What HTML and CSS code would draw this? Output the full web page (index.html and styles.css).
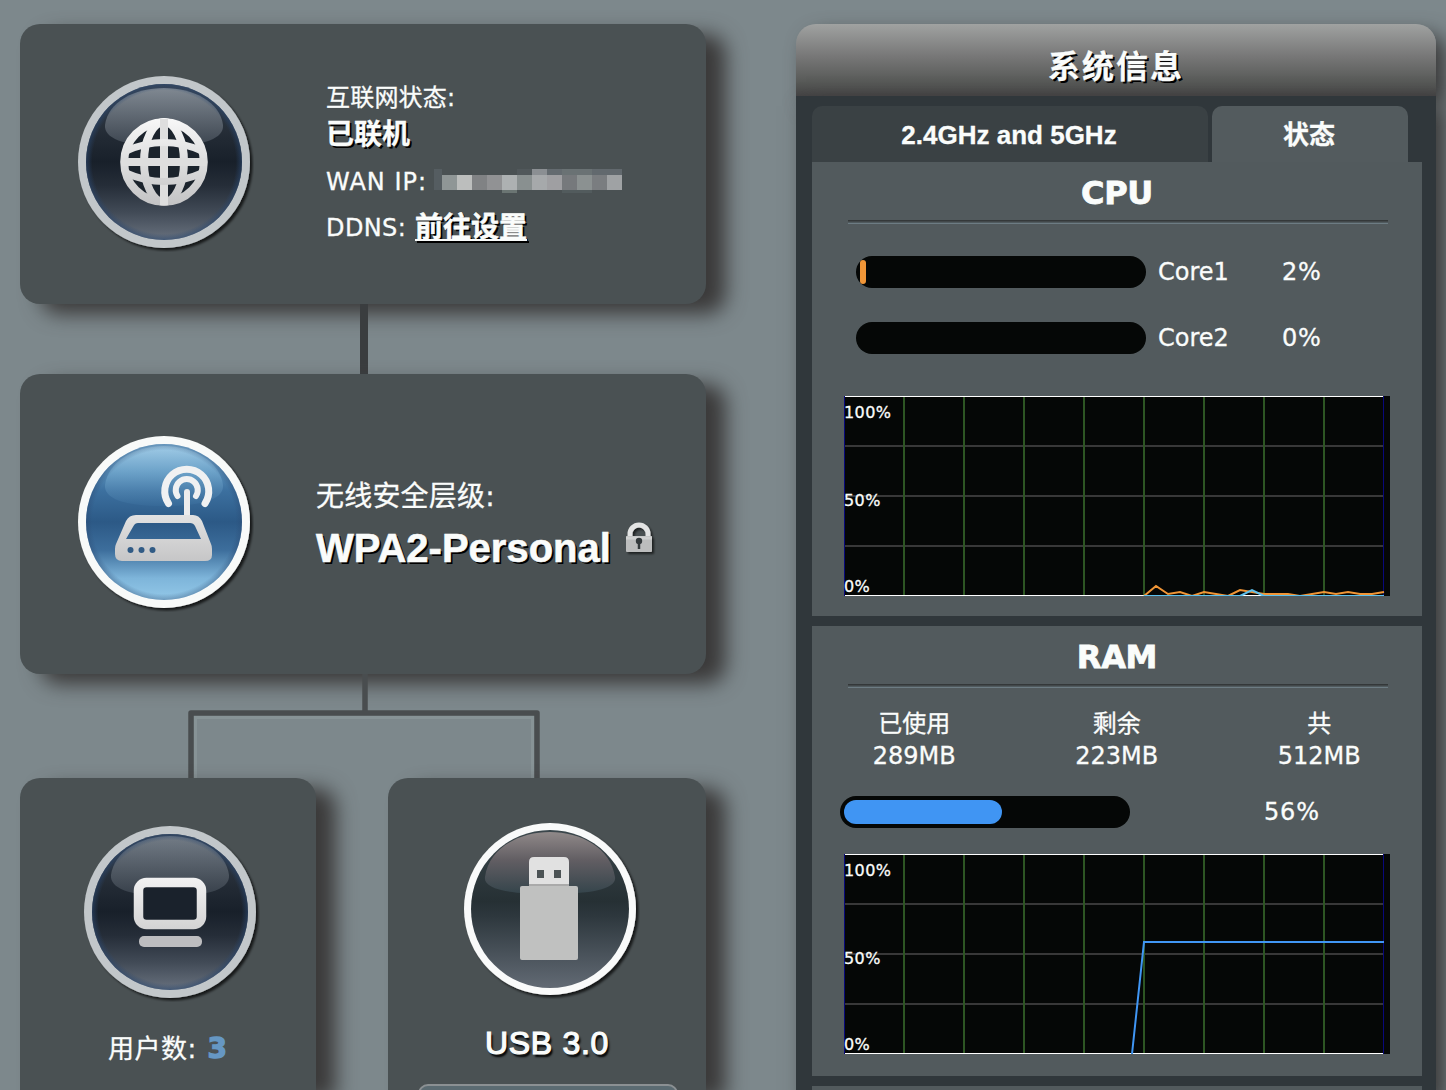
FILE: index.html
```
<!DOCTYPE html>
<html lang="zh-CN">
<head>
<meta charset="utf-8">
<title>网络地图</title>
<link rel="stylesheet" href="styles.css">
</head>
<body>
<svg class="defs" width="0" height="0" aria-hidden="true">
  <defs>
    <linearGradient id="dark" x1="0" y1="0" x2="0" y2="1"><stop offset="0" stop-color="#394554"/><stop offset=".3" stop-color="#252d37"/><stop offset=".5" stop-color="#18202a"/><stop offset=".65" stop-color="#252d38"/><stop offset=".82" stop-color="#414a56"/><stop offset="1" stop-color="#68717e"/></linearGradient>
    <linearGradient id="darkGloss" x1="0" y1="0" x2="0" y2="1"><stop offset="0" stop-color="#929aa2"/><stop offset="1" stop-color="#434c57"/></linearGradient>
    <linearGradient id="blue" x1="0" y1="0" x2="0" y2="1"><stop offset="0" stop-color="#83bade"/><stop offset=".3" stop-color="#3c709f"/><stop offset=".5" stop-color="#2c5986"/><stop offset=".68" stop-color="#3d6e9c"/><stop offset=".86" stop-color="#7eb5da"/><stop offset="1" stop-color="#93c8e8"/></linearGradient>
    <linearGradient id="blueGloss" x1="0" y1="0" x2="0" y2="1"><stop offset="0" stop-color="#b4d9ee"/><stop offset=".45" stop-color="#77add2"/><stop offset="1" stop-color="#396c9b"/></linearGradient>
    <linearGradient id="usb" x1="0" y1="0" x2="0" y2="1"><stop offset="0" stop-color="#3b474c"/><stop offset=".45" stop-color="#263034"/><stop offset=".55" stop-color="#2e383e"/><stop offset="1" stop-color="#626a74"/></linearGradient>
    <linearGradient id="usbGloss" x1="0" y1="0" x2="0" y2="1"><stop offset="0" stop-color="#908989"/><stop offset=".45" stop-color="#625e63"/><stop offset="1" stop-color="#34444b"/></linearGradient>
    <linearGradient id="metal" gradientUnits="userSpaceOnUse" x1="0" y1="46" x2="0" y2="134"><stop offset="0" stop-color="#f8f8f8"/><stop offset="1" stop-color="#c3c3c4"/></linearGradient>
    <radialGradient id="edge"><stop offset=".92" stop-color="#2b4870" stop-opacity="0"/><stop offset="1" stop-color="#2b4870" stop-opacity=".6"/></radialGradient>
    <filter id="drop" x="-10%" y="-10%" width="125%" height="125%"><feDropShadow dx="2.500" dy="2.500" stdDeviation="1.300" flood-color="#000" flood-opacity=".7"/></filter>
    <filter id="dropSmall" x="-20%" y="-20%" width="150%" height="150%"><feDropShadow dx="2" dy="2" stdDeviation="1" flood-color="#000" flood-opacity=".6"/></filter>
    <g id="grid">
      <rect width="546" height="200" fill="#050706"/>
      <path d="M0 50H540M0 100H540M0 150H540" stroke="#383838" stroke-width="2"/>
      <path d="M60 0V200M120 0V200M180 0V200M240 0V200M300 0V200M360 0V200M420 0V200M480 0V200" stroke="#2d5523" stroke-width="2"/>
      <path d="M.5 0V200M539.5 0V200" stroke="#08087a"/>
      <path d="M1 .5H539M1 199.5H539" stroke="#fff"/>
    </g>
  </defs>
</svg>

<main class="page">
  <div class="map">
    <section class="card internet">
      <svg class="orb" width="180" height="180" viewBox="0 0 180 180">
        <circle cx="90" cy="90" r="86" fill="#c2c7ca" filter="url(#drop)"/>
        <circle cx="90" cy="90" r="78" fill="url(#dark)"/>
        <path d="M31 53C34 30 60 16 90 16S146 30 149 53C150 66 132 74 90 74S30 66 31 53Z" fill="url(#darkGloss)" opacity=".8"/>
        <circle cx="90" cy="90" r="78" fill="url(#edge)"/>
        <circle cx="90" cy="90" r="42" fill="#1b232c"/>
        <g fill="none" stroke="url(#metal)" stroke-width="8">
          <circle cx="90" cy="90" r="39.800"/>
          <ellipse cx="90" cy="90" rx="20" ry="40"/>
          <path d="M90 47V133M47 90.010H133" stroke="#dedede"/>
          <path d="M52 79Q90 62 128 79M52 101Q90 118 128 101" stroke-width="7"/>
        </g>
      </svg>
      <div class="internet-info">
        <div class="row label">互联网状态:</div>
        <div class="row strong">已联机</div>
        <div class="row wan"><span>WAN IP:</span>
          <svg class="mosaic" width="188" height="24" viewBox="0 0 188 24" shape-rendering="crispEdges">
            <path fill="#555d61" d="M0 0h8v21H0z"/><path fill="#8f9696" d="M8 6h15v15H8z"/><path fill="#bcbebd" d="M23 6h15v15H23z"/><path fill="#808284" d="M38 6h15v15H38z"/><path fill="#919294" d="M53 6h15v15H53z"/><path fill="#adb1b2" d="M68 6h15v15H68z"/><path fill="#6b7573" d="M68 21h15v3H68z"/><path fill="#899090" d="M83 6h15v15H83z"/><path fill="#51585b" d="M83 0h15v6H83z"/><path fill="#8b8f93" d="M98 0h15v6H98z"/><path fill="#a6a9ab" d="M98 6h15v15H98z"/><path fill="#646b70" d="M113 0h15v6h-15z"/><path fill="#9f9fa2" d="M113 6h15v15h-15z"/><path fill="#6a7274" d="M128 0h30v6h-30z"/><path fill="#76797c" d="M128 6h15v15h-15z"/><path fill="#525b5d" d="M128 21h30v3h-30z"/><path fill="#8b9191" d="M143 6h15v15h-15z"/><path fill="#62696e" d="M158 0h30v6h-30z"/><path fill="#7a7d80" d="M158 6h15v15h-15z"/><path fill="#9fa2a4" d="M173 6h15v15h-15z"/>
          </svg>
        </div>
        <div class="row ddns"><span>DDNS:</span><a class="strong link">前往设置</a></div>
      </div>
    </section>

    <div class="link-line"></div>

    <section class="card wireless">
      <svg class="orb" width="180" height="180" viewBox="0 0 180 180">
        <circle cx="90" cy="90" r="86" fill="#f8faf9" filter="url(#drop)"/>
        <circle cx="90" cy="90" r="78" fill="url(#blue)"/>
        <path d="M31 53C34 30 60 14 90 14S146 30 149 53C150 66 132 74 90 74S30 66 31 53Z" fill="url(#blueGloss)" opacity=".6"/>
        <circle cx="90" cy="90" r="78" fill="url(#edge)" opacity=".6"/>
        <g fill="none" stroke="#f0f1f2" stroke-linecap="round">
          <path d="M94.500 71.500A22 22 0 1 1 131 71.500" stroke-width="7"/>
          <path d="M103.500 64A11 11 0 1 1 122 64" stroke-width="6"/>
          <path d="M113 60V86" stroke="#ececed" stroke-width="6"/>
        </g>
        <path fill-rule="evenodd" fill="url(#metal)" d="M62 83H119Q125 83 128 89L137 112Q138 114 138 117V123Q138 129 131 129H48Q41 129 41 122V117Q41 114 42 112L52 89Q55 83 62 83ZM64 91Q61 91 59.500 94L52 107H127L121 94Q119.500 91 116 91Z"/>
        <g fill="#315b85"><circle cx="56.500" cy="118" r="3"/><circle cx="67.500" cy="118" r="3"/><circle cx="78.500" cy="118" r="3"/></g>
      </svg>
      <div class="wireless-info">
        <div class="wl-label">无线安全层级:</div>
        <div class="wl-row"><span class="wl-value">WPA2-Personal</span>
          <svg class="lock" width="32" height="36" viewBox="0 0 32 36">
            <g filter="url(#dropSmall)"><path d="M6 17V12A9 9 0 0 1 24 12V17" fill="none" stroke="#e3e4e4" stroke-width="5"/><rect x="2" y="14" width="26" height="16" rx="1" fill="#bcbdbd"/></g>
            <path d="M2 16H28" stroke="#d1d2d2" stroke-width="3"/>
            <circle cx="15" cy="19" r="3.200" fill="#343a3c"/><path d="M15 19V27" stroke="#343a3c" stroke-width="2.500"/>
          </svg>
        </div>
      </div>
    </section>

    <svg class="branch" width="686" height="104" viewBox="0 0 686 104">
      <path d="M175.500 104V43.500H512.500V104" fill="none" stroke="#879396" stroke-width="3"/>
      <path d="M345 0V39M171 104V39H517V104" fill="none" stroke="#494d4f" stroke-width="5.500" stroke-linejoin="round"/>
    </svg>

    <div class="bottom-cards">
      <section class="card clients">
        <svg class="orb" width="180" height="180" viewBox="0 0 180 180">
          <circle cx="90" cy="90" r="86" fill="#c2c7ca" filter="url(#drop)"/>
          <circle cx="90" cy="90" r="78" fill="url(#dark)"/>
          <path d="M31 53C34 30 60 14 90 14S146 30 149 53C150 66 132 74 90 74S30 66 31 53Z" fill="url(#darkGloss)" opacity=".65"/>
          <circle cx="90" cy="90" r="78" fill="url(#edge)"/>
          <rect x="58.500" y="60.500" width="63" height="42" rx="8" fill="#1a222c" stroke="url(#metal)" stroke-width="9.500"/>
          <rect x="59" y="114" width="63" height="11" rx="5" fill="#bdbdbf"/>
        </svg>
        <div class="client-count">用户数: <b>3</b></div>
      </section>
      <section class="card usb">
        <svg class="orb" width="180" height="180" viewBox="0 0 180 180">
          <circle cx="90" cy="90" r="86" fill="#f9fafa" filter="url(#drop)"/>
          <circle cx="90" cy="90" r="79" fill="url(#usb)"/>
          <path d="M25 58C29 29 59 13 90 13S151 29 155 58C157 70 132 75 90 75S23 70 25 58Z" fill="url(#usbGloss)"/>
          <path d="M69 69V43Q69 38 74 38H104Q109 38 109 43V69Z" fill="#e1e1e1"/>
          <path d="M69 66H109" stroke="#aaa" stroke-width="2"/>
          <path d="M77 51h7v8h-7zM94 51h7v8h-7z" fill="#4c5355"/>
          <rect x="60" y="67" width="58" height="74" rx="2" fill="#c0c1c0"/>
        </svg>
        <div class="usb-label">USB 3.0</div>
        <div class="usb-box"></div>
      </section>
    </div>
  </div>

  <aside class="panel">
    <header class="panel-title">系统信息</header>
    <div class="panel-body">
      <nav class="tabs"><div class="tab wifi">2.4GHz and 5GHz</div><div class="tab active">状态</div></nav>
      <section class="block cpu">
        <h2>CPU</h2>
        <div class="rule"></div>
        <div class="core first"><div class="bar"><div class="fill orange" style="width:2%"></div></div><span class="name">Core1</span><span class="pct">2%</span></div>
        <div class="core"><div class="bar"></div><span class="name">Core2</span><span class="pct">0%</span></div>
        <div class="chart">
          <svg width="546" height="200" viewBox="0 0 546 200"><use href="#grid"/>
            <path d="M300 200L312 190 324 198 336 196 348 200 360 196 372 198 384 200 396 194 408 196 420 198 432 198 444 198 456 200 468 198 480 196 492 198 504 196 516 198 528 198 540 196" fill="none" stroke="#f09536" stroke-width="2"/>
            <path d="M300 200H396L408 194 420 200H540" fill="none" stroke="#5cc0ee" stroke-width="2"/>
          </svg>
          <span class="tick t100">100%</span><span class="tick t50">50%</span><span class="tick t0">0%</span>
        </div>
      </section>
      <section class="block ram">
        <h2>RAM</h2>
        <div class="rule"></div>
        <div class="memory"><div>已使用<br>289MB</div><div>剩余<br>223MB</div><div>共<br>512MB</div></div>
        <div class="usage"><div class="bar"><div class="fill blue" style="width:56%"></div></div><span class="pct">56%</span></div>
        <div class="chart">
          <svg width="546" height="200" viewBox="0 0 546 200"><use href="#grid"/><path d="M288 200L300 88H540" fill="none" stroke="#4096f4" stroke-width="2"/></svg>
          <span class="tick t100">100%</span><span class="tick t50">50%</span><span class="tick t0">0%</span>
        </div>
      </section>
      <section class="block next"></section>
    </div>
  </aside>
</main>
</body>
</html>
```

FILE: styles.css
```
* { box-sizing: border-box; }
body { margin: 0; background: #7d888c; color: #fafcfb; font-family: "DejaVu Sans", "Noto Sans CJK SC", sans-serif; font-size: 24px; -webkit-text-stroke: .3px currentColor; }
.defs { position: absolute; }
svg { display: block; flex: none; }
.page { display: flex; gap: 90px; height: 1090px; padding: 24px 10px 0 20px; overflow: hidden; }
.map { width: 686px; flex: none; }
.card { background: #4a5153; border-radius: 20px; box-shadow: 20px 10px 20px #3b3a3a; }
.internet { height: 280px; display: flex; padding: 48px 0 0 54px; }
.internet-info { margin: 7px 0 0 72px; white-space: nowrap; }
.row { display: flex; align-items: center; height: 46px; line-height: 46px; }
.row.label { height: 38px; line-height: 38px; letter-spacing: .2px; }
.row.strong { height: 36px; line-height: 36px; margin-bottom: 6px; }
.strong { font-family: "Liberation Sans", "Noto Sans CJK SC", sans-serif; font-weight: bold; font-size: 28px; text-shadow: 2px 2px 0 #000; }
.wan span { width: 108px; letter-spacing: 1px; }
.wan .mosaic { margin-bottom: 2px; }
.ddns span { width: 89px; letter-spacing: .4px; }
.link { text-decoration: underline 2px; text-underline-offset: 2px; text-decoration-skip-ink: none; }
.link-line { width: 8px; height: 70px; margin-left: 340px; background: #3a3d3f; }
.wireless { height: 300px; display: flex; padding: 58px 0 0 54px; }
.wireless-info { margin: 45px 0 0 62px; white-space: nowrap; }
.wl-label { font-size: 28px; line-height: 40px; letter-spacing: .2px; }
.wl-row { display: flex; align-items: flex-start; height: 62px; }
.wl-value { font: bold 40px/62px "Liberation Sans", sans-serif; width: 308px; text-shadow: 2px 2px 0 #000; -webkit-text-stroke: .6px #fafcfb; }
.lock { margin-top: 5px; }
.bottom-cards { display: flex; gap: 72px; height: 312px; }
.clients { width: 296px; padding: 44px 0 0 60px; border-radius: 20px 20px 0 0; }
.client-count { margin: 23px 0 0 28px; font-size: 26px; letter-spacing: .5px; line-height: 48px; white-space: nowrap; }
.client-count b { color: #6697c3; font-size: 28px; -webkit-text-stroke: 1.4px #6697c3; margin-left: 2px; }
.usb { width: 318px; padding: 41px 28px 0 30px; border-radius: 20px 20px 0 0; overflow: hidden; }
.usb .orb { margin-left: 42px; }
.usb-label { font: 32px/44px "Liberation Sans", sans-serif; -webkit-text-stroke: 1.2px #fafcfb; text-align: center; margin: 22px 0 0 -2px; letter-spacing: .7px; text-shadow: 2px 3px 2px #000; }
.usb-box { height: 30px; margin-top: 19px; border: 2px solid #8b9093; border-radius: 10px; background: #5b6b72; }
.panel { width: 640px; flex: none; }
.panel-title { height: 72px; border-radius: 20px 20px 0 0; background: linear-gradient(#a0a2a1, #777 45%, #565856 82%, #444344); box-shadow: 10px 10px 20px #3b3a3a; text-align: center; font: bold 32px/86px "Liberation Sans", "Noto Sans CJK SC", sans-serif; letter-spacing: 2px; text-shadow: 2px 2px 0 #000; }
.panel-body { height: 1000px; padding: 10px 14px 0 16px; background: #30373b; box-shadow: 10px 10px 20px #3b3a3a; }
.tabs { display: flex; gap: 4px; }
.tab { height: 56px; border-radius: 10px 10px 0 0; background: #3a4144; text-align: center; font: bold 26px/59px "Liberation Sans", "Noto Sans CJK SC", sans-serif; }
.tab.wifi { width: 396px; padding-right: 2px; }
.tab.active { width: 196px; padding-right: 2px; background: #535b5e; }
.block { background: #525a5d; margin-bottom: 10px; padding: 0 32px; }
.cpu { height: 454px; }
.ram { height: 450px; }
.next { height: 60px; }
h2 { margin: 0; height: 58px; font-size: 32px; line-height: 62px; text-align: center; -webkit-text-stroke: .8px #fafcfb; letter-spacing: -.3px; }
.rule { height: 4px; margin: 0 2px 0 4px; background: linear-gradient(#343839 0 1px, #42484a 1px 2px, #505a5e 2px 3px, #6d7c83 3px); }
.core { display: flex; align-items: center; height: 32px; margin: 0 0 34px 12px; }
.core.first { margin-top: 32px; }
.bar { width: 290px; height: 32px; padding: 4px; border-radius: 16px; background: #050706; }
.fill { height: 24px; }
.orange { background: #f09638; border-radius: 3px; }
.blue { background: #4095f3; border-radius: 12px; }
.core .name { width: 124px; margin-left: 12px; }
.pct { letter-spacing: .8px; }
.core + .chart { margin-top: 42px; }
.chart { position: relative; width: 546px; height: 200px; }
.tick { position: absolute; left: 0; font-size: 16px; line-height: 20px; letter-spacing: .4px; }
.t100 { top: 7px; }
.t50 { top: 95px; }
.t0 { bottom: -1px; }
.memory { display: grid; grid-template-columns: repeat(3, 202.5px); margin: 20px -31px 24px; line-height: 32px; text-align: center; }
.usage { display: flex; align-items: center; height: 32px; margin: 0 0 26px -4px; }
.usage span { margin-left: 134px; }
```
